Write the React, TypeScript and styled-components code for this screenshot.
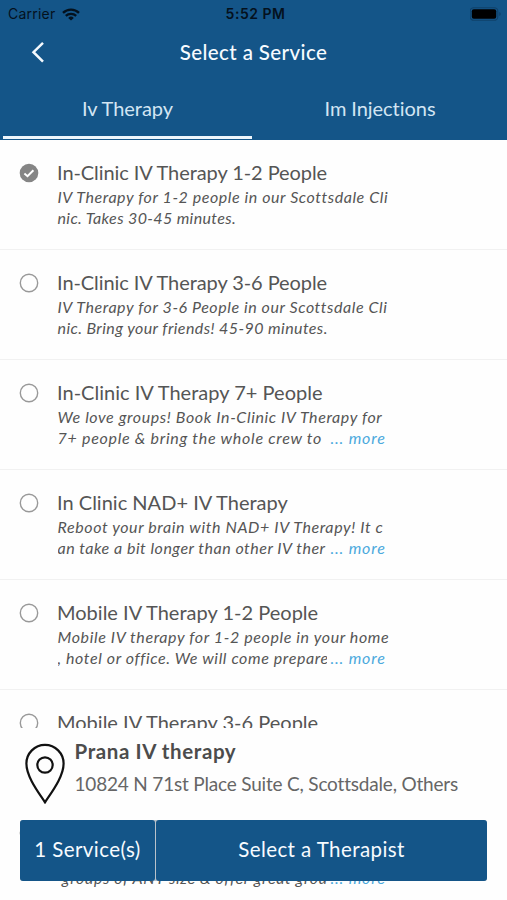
import React from 'react';
import styled, { createGlobalStyle } from 'styled-components';

const GlobalStyle = createGlobalStyle`
  * { box-sizing: border-box; }
  body { margin: 0; background: #fff; }
`;

const Screen = styled.div`
  position: relative;
  width: 507px;
  height: 900px;
  overflow: hidden;
  background: #fefefe;
  color: #555;
  font-family: Lato, 'Liberation Sans', sans-serif;
`;

const Header = styled.header`
  display: flex;
  flex-direction: column;
  height: 140px;
  background: #145588;
`;

const StatusBar = styled.div`
  display: grid;
  grid-template-columns: 1fr auto 1fr;
  align-items: center;
  height: 28px;
  padding: 0 5px 0 8px;
  color: #04111d;
  font: 14px/28px Inter, 'Liberation Sans', sans-serif;
`;

const Carrier = styled.div`
  display: flex;
  align-items: center;
  gap: 6px;
  letter-spacing: 0.23px;
`;

const Clock = styled.div`
  padding-left: 1px;
  font-weight: 600;
  letter-spacing: 0.5px;
`;

const BatteryIcon = styled.svg`
  justify-self: end;
`;

const NavBar = styled.div`
  display: grid;
  grid-template-columns: 60px 1fr 60px;
  align-items: center;
  height: 48px;
`;

const BackButton = styled.button`
  display: flex;
  width: 60px;
  height: 44px;
  padding: 0 0 0 30px;
  align-items: center;
  border: 0;
  background: none;
`;

const NavTitle = styled.h1`
  margin: 0;
  color: #f7fbff;
  font-size: 20.5px;
  font-weight: 500;
  line-height: 48px;
  letter-spacing: 0.4px;
  text-align: center;
`;

const Tabs = styled.div`
  display: grid;
  grid-template-columns: 249px 1fr;
  height: 63px;
  padding-left: 3px;
`;

const Tab = styled.button<{ $active?: boolean }>`
  height: 63px;
  padding: 4px 0 0;
  border: 0;
  border-bottom: 3px solid ${(p) => (p.$active ? '#eef6fc' : 'transparent')};
  background: none;
  color: #d3e5f3;
  font: 20px/56px Lato, sans-serif;
  letter-spacing: -0.05px;
  text-align: center;
`;

const TabLabel = styled.span<{ $indent?: number }>`
  padding-left: ${(p) => p.$indent ?? 0}px;
`;

const List = styled.div`
  display: flex;
  flex-direction: column;
`;

const Row = styled.div`
  display: flex;
  flex: none;
  height: 110px;
  padding: 19px 0 0 19px;
  border-bottom: 1px solid #f1f1f1;
`;

const RadioIcon = styled.svg`
  flex: none;
  margin: 4px 18px 0 0;
`;

const RowBody = styled.div`
  width: 345px;
`;

const Title = styled.div<{ $spacing: number }>`
  height: 27px;
  font-size: 20px;
  line-height: 26px;
  white-space: pre;
  letter-spacing: ${(p) => p.$spacing}px;
`;

const DescriptionLine = styled.div`
  display: flex;
  height: 21px;
  padding-left: 0.5px;
  font-size: 16px;
  font-style: italic;
  line-height: 21px;
`;

const Description = styled.span<{ $spacing: number; $clipped?: boolean }>`
  width: ${(p) => (p.$clipped ? '269px' : 'auto')};
  overflow: ${(p) => (p.$clipped ? 'hidden' : 'visible')};
  white-space: pre;
  letter-spacing: ${(p) => p.$spacing}px;
`;

const More = styled.a`
  margin-left: 4px;
  color: #4ba9dd;
  letter-spacing: 0.8px;
`;

const Footer = styled.footer`
  position: absolute;
  left: 0;
  right: 0;
  bottom: 19px;
`;

const Location = styled.div`
  display: flex;
  height: 92px;
  padding: 10px 0 0 24px;
  background: #fefefe;
`;

const PinIcon = styled.svg`
  flex: none;
  margin: 5px 8.5px 0 0;
`;

const PlaceName = styled.div`
  color: #4c4c4c;
  font-size: 20.5px;
  font-weight: 700;
  line-height: 27px;
  letter-spacing: 0.6px;
`;

const Address = styled.div`
  margin-top: 5px;
  color: #666;
  font-size: 19px;
  line-height: 27px;
  letter-spacing: -0.19px;
  white-space: nowrap;
`;

const Actions = styled.div`
  display: grid;
  grid-template-columns: 135px 331px;
  gap: 1px;
  margin: 0 20px;
  border-radius: 3px;
  background: #b9c2ca;
`;

const ActionButton = styled.button`
  height: 61px;
  padding: 0 0 2px;
  border: 0;
  border-radius: 3px;
  background: #145588;
  color: #f7fbff;
  font: 20.5px/59px Lato, sans-serif;
  letter-spacing: 0.42px;
`;

type Line = [text: string, spacing: number];
type Service = { title: Line; lines: Line[]; more?: boolean; selected?: boolean };

const services: Service[] = [
  {
    title: ['In-Clinic IV Therapy 1-2 People', -0.075],
    lines: [['IV Therapy for 1-2 people in our Scottsdale Cli', 0.57], ['nic. Takes 30-45 minutes.', 0.36]],
    selected: true,
  },
  {
    title: ['In-Clinic IV Therapy 3-6 People', -0.075],
    lines: [['IV Therapy for 3-6 People in our Scottsdale Cli', 0.57], ['nic. Bring your friends! 45-90 minutes.', 0.41]],
  },
  {
    title: ['In-Clinic IV Therapy 7+ People', 0.02],
    lines: [['We love groups! Book In-Clinic IV Therapy for', 0.6], ['7+ people & bring the whole crew to', 0.72]],
    more: true,
  },
  {
    title: ['In Clinic NAD+ IV Therapy', 0.01],
    lines: [['Reboot your brain with NAD+ IV Therapy! It c', 0.6], ['an take a bit longer than other IV ther', 0.5]],
    more: true,
  },
  {
    title: ['Mobile IV Therapy 1-2 People', 0.01],
    lines: [['Mobile IV therapy for 1-2 people in your home', 0.61], [', hotel or office. We will come prepare', 0.6]],
    more: true,
  },
  {
    title: ['Mobile IV Therapy 3-6 People', 0.01],
    lines: [],
  },
  {
    title: ['', 0],
    lines: [['', 0], [' groups of ANY size & offer great grou', 0.6]],
    more: true,
  },
];

function Radio({ selected }: { selected?: boolean }) {
  return (
    <RadioIcon width="20" height="20" viewBox="0 0 20 20" fill="none">
      {selected ? (
        <>
          <circle cx="10" cy="10" r="9.3" fill="#858585" />
          <path d="M5.4 10.6 8.5 13.2 14.4 7.2" stroke="#fff" strokeWidth="2" />
        </>
      ) : (
        <circle cx="10" cy="10" r="8.7" stroke="#999" strokeWidth="1.4" />
      )}
    </RadioIcon>
  );
}

function ServiceRow({ service }: { service: Service }) {
  return (
    <Row>
      <Radio selected={service.selected} />
      <RowBody>
        <Title $spacing={service.title[1]}>{service.title[0]}</Title>
        {service.lines.map(([text, spacing], i) => {
          const withMore = service.more && i === 1;
          return (
            <DescriptionLine key={i}>
              <Description $spacing={spacing} $clipped={withMore}>{text}</Description>
              {withMore && <More>... more</More>}
            </DescriptionLine>
          );
        })}
      </RowBody>
    </Row>
  );
}

export default function App() {
  return (
    <Screen>
      <GlobalStyle />
      <Header>
        <StatusBar>
          <Carrier>
            Carrier
            <svg width="18" height="13" viewBox="0 0 18 13" fill="none" stroke="#04111d">
              <path d="M1 4.9a11.5 11.5 0 0 1 16 0" strokeWidth="2.4" />
              <path d="M3.8 7.9a7.5 7.5 0 0 1 10.4 0" strokeWidth="2.3" />
              <path d="M9 12.6 6.2 9.9a4 4 0 0 1 5.6 0z" fill="#04111d" stroke="none" />
            </svg>
          </Carrier>
          <Clock>5:52 PM</Clock>
          <BatteryIcon width="32" height="14" viewBox="0 0 32 14" fill="none">
            <rect x="0.2" y="0.7" width="27.6" height="12.6" rx="3.6" stroke="#0f416a" strokeWidth="1.1" />
            <rect x="1.8" y="2.3" width="24.4" height="9.4" rx="2" fill="#000" />
            <path d="M29.3 5v4q1.4-.6 1.4-2t-1.4-2z" fill="#0f416a" />
          </BatteryIcon>
        </StatusBar>
        <NavBar>
          <BackButton aria-label="Back">
            <svg width="16" height="22" viewBox="0 0 16 22" fill="none">
              <path d="M13 1.8 3.5 11.2 13 20.6" stroke="#f4f9fd" strokeWidth="2.5" />
            </svg>
          </BackButton>
          <NavTitle>Select a Service</NavTitle>
        </NavBar>
        <Tabs>
          <Tab $active>
            <TabLabel>Iv Therapy</TabLabel>
          </Tab>
          <Tab>
            <TabLabel $indent={1}>Im Injections</TabLabel>
          </Tab>
        </Tabs>
      </Header>
      <List>
        {services.map((service, i) => (
          <ServiceRow key={i} service={service} />
        ))}
      </List>
      <Footer>
        <Location>
          <PinIcon width="42" height="62" viewBox="0 0 42 62" fill="none" stroke="#111" strokeWidth="2.2">
            <path d="M21 59.3C15 50 2.4 34 2.4 20.5a18.6 18.6 0 0 1 37.2 0C39.6 34 27 50 21 59.3z" />
            <circle cx="21" cy="22" r="7.7" />
          </PinIcon>
          <div>
            <PlaceName>Prana IV therapy</PlaceName>
            <Address>10824 N 71st Place Suite C, Scottsdale, Others</Address>
          </div>
        </Location>
        <Actions>
          <ActionButton>1 Service(s)</ActionButton>
          <ActionButton>Select a Therapist</ActionButton>
        </Actions>
      </Footer>
    </Screen>
  );
}
